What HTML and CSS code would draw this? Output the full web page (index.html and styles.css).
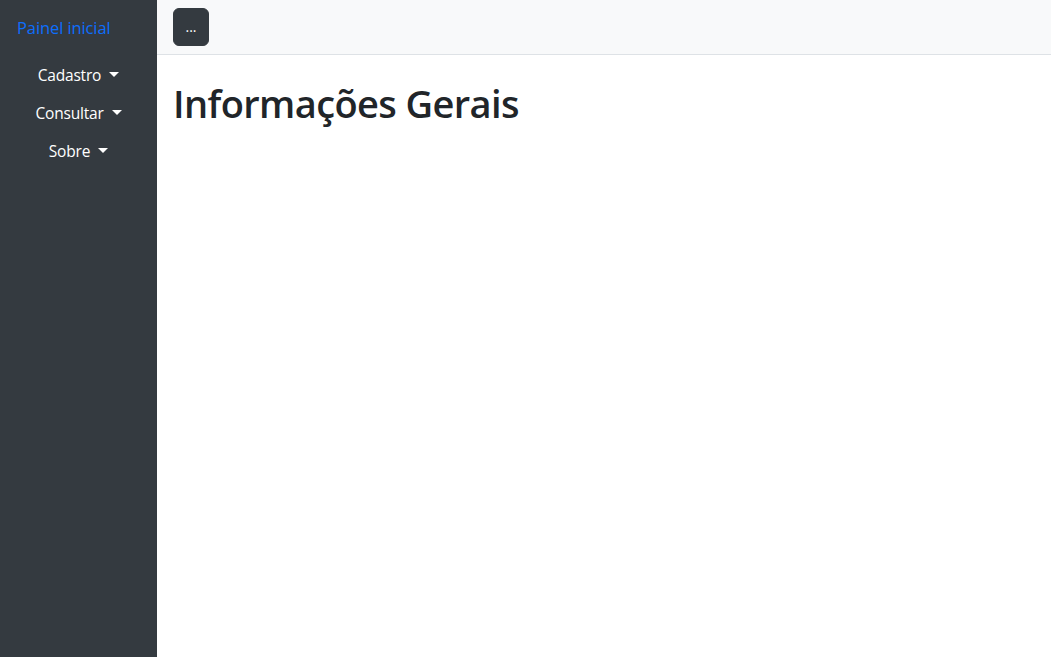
FILE: index.html
```html
<!DOCTYPE html>
<html lang="pt-BR">
<head>
<meta charset="utf-8">
<title>Painel</title>
<link rel="stylesheet" href="styles.css">
</head>
<body>
<div class="layout">
  <aside class="sidebar">
    <a class="brand" href="#">Painel inicial</a>
    <nav class="side-nav">
      <a class="side-link dropdown-toggle" href="#">Cadastro</a>
      <a class="side-link dropdown-toggle" href="#">Consultar</a>
      <a class="side-link dropdown-toggle" href="#">Sobre</a>
    </nav>
  </aside>
  <div class="main">
    <header class="topbar">
      <button class="btn-dark" type="button">...</button>
    </header>
    <section class="content">
      <h1 class="title">Informações Gerais</h1>
    </section>
  </div>
</div>
</body>
</html>
```
FILE: styles.css
```css
* { box-sizing: border-box; }
html, body { margin: 0; height: 100%; }
body {
  font-family: "Open Sans", "Noto Sans", sans-serif;
  font-size: 16px;
  color: #212529;
  background: #fff;
}
.layout {
  display: flex;
  height: 100vh;
}
.sidebar {
  width: 157px;
  flex: 0 0 157px;
  background: #343a40;
  display: flex;
  flex-direction: column;
  padding-top: 16px;
}
.brand {
  color: #0d6efd;
  text-decoration: none;
  font-size: 16.5px;
  line-height: 24px;
  padding: 0 0 0 17px;
  margin-bottom: 16px;
  letter-spacing: -0.1px;
}
.side-nav {
  display: flex;
  flex-direction: column;
  align-items: center;
}
.side-link {
  color: #fff;
  text-decoration: none;
  font-size: 15.5px;
  line-height: 22px;
  padding: 8px 16px;
  letter-spacing: -0.2px;
}
.dropdown-toggle::after {
  content: "";
  display: inline-block;
  margin-left: 8px;
  vertical-align: 4px;
  border-top: 5px solid #fff;
  border-left: 5px solid transparent;
  border-right: 5px solid transparent;
}
.main {
  flex: 1;
  display: flex;
  flex-direction: column;
  min-width: 0;
}
.topbar {
  background: #f8f9fa;
  border-bottom: 1px solid #dee2e6;
  height: 55px;
  padding: 8px 16px;
  display: flex;
  align-items: flex-start;
}
.btn-dark {
  width: 36px;
  height: 38px;
  background: #343a40;
  border: 1px solid #343a40;
  border-radius: 6px;
  color: #fff;
  font-family: inherit;
  font-size: 14px;
  line-height: 1;
  padding: 0;
}
.content {
  padding: 24px 16px;
}
.title {
  margin: 0;
  font-size: 38px;
  font-weight: 600;
  line-height: 48px;
  letter-spacing: -0.6px;
}
```
